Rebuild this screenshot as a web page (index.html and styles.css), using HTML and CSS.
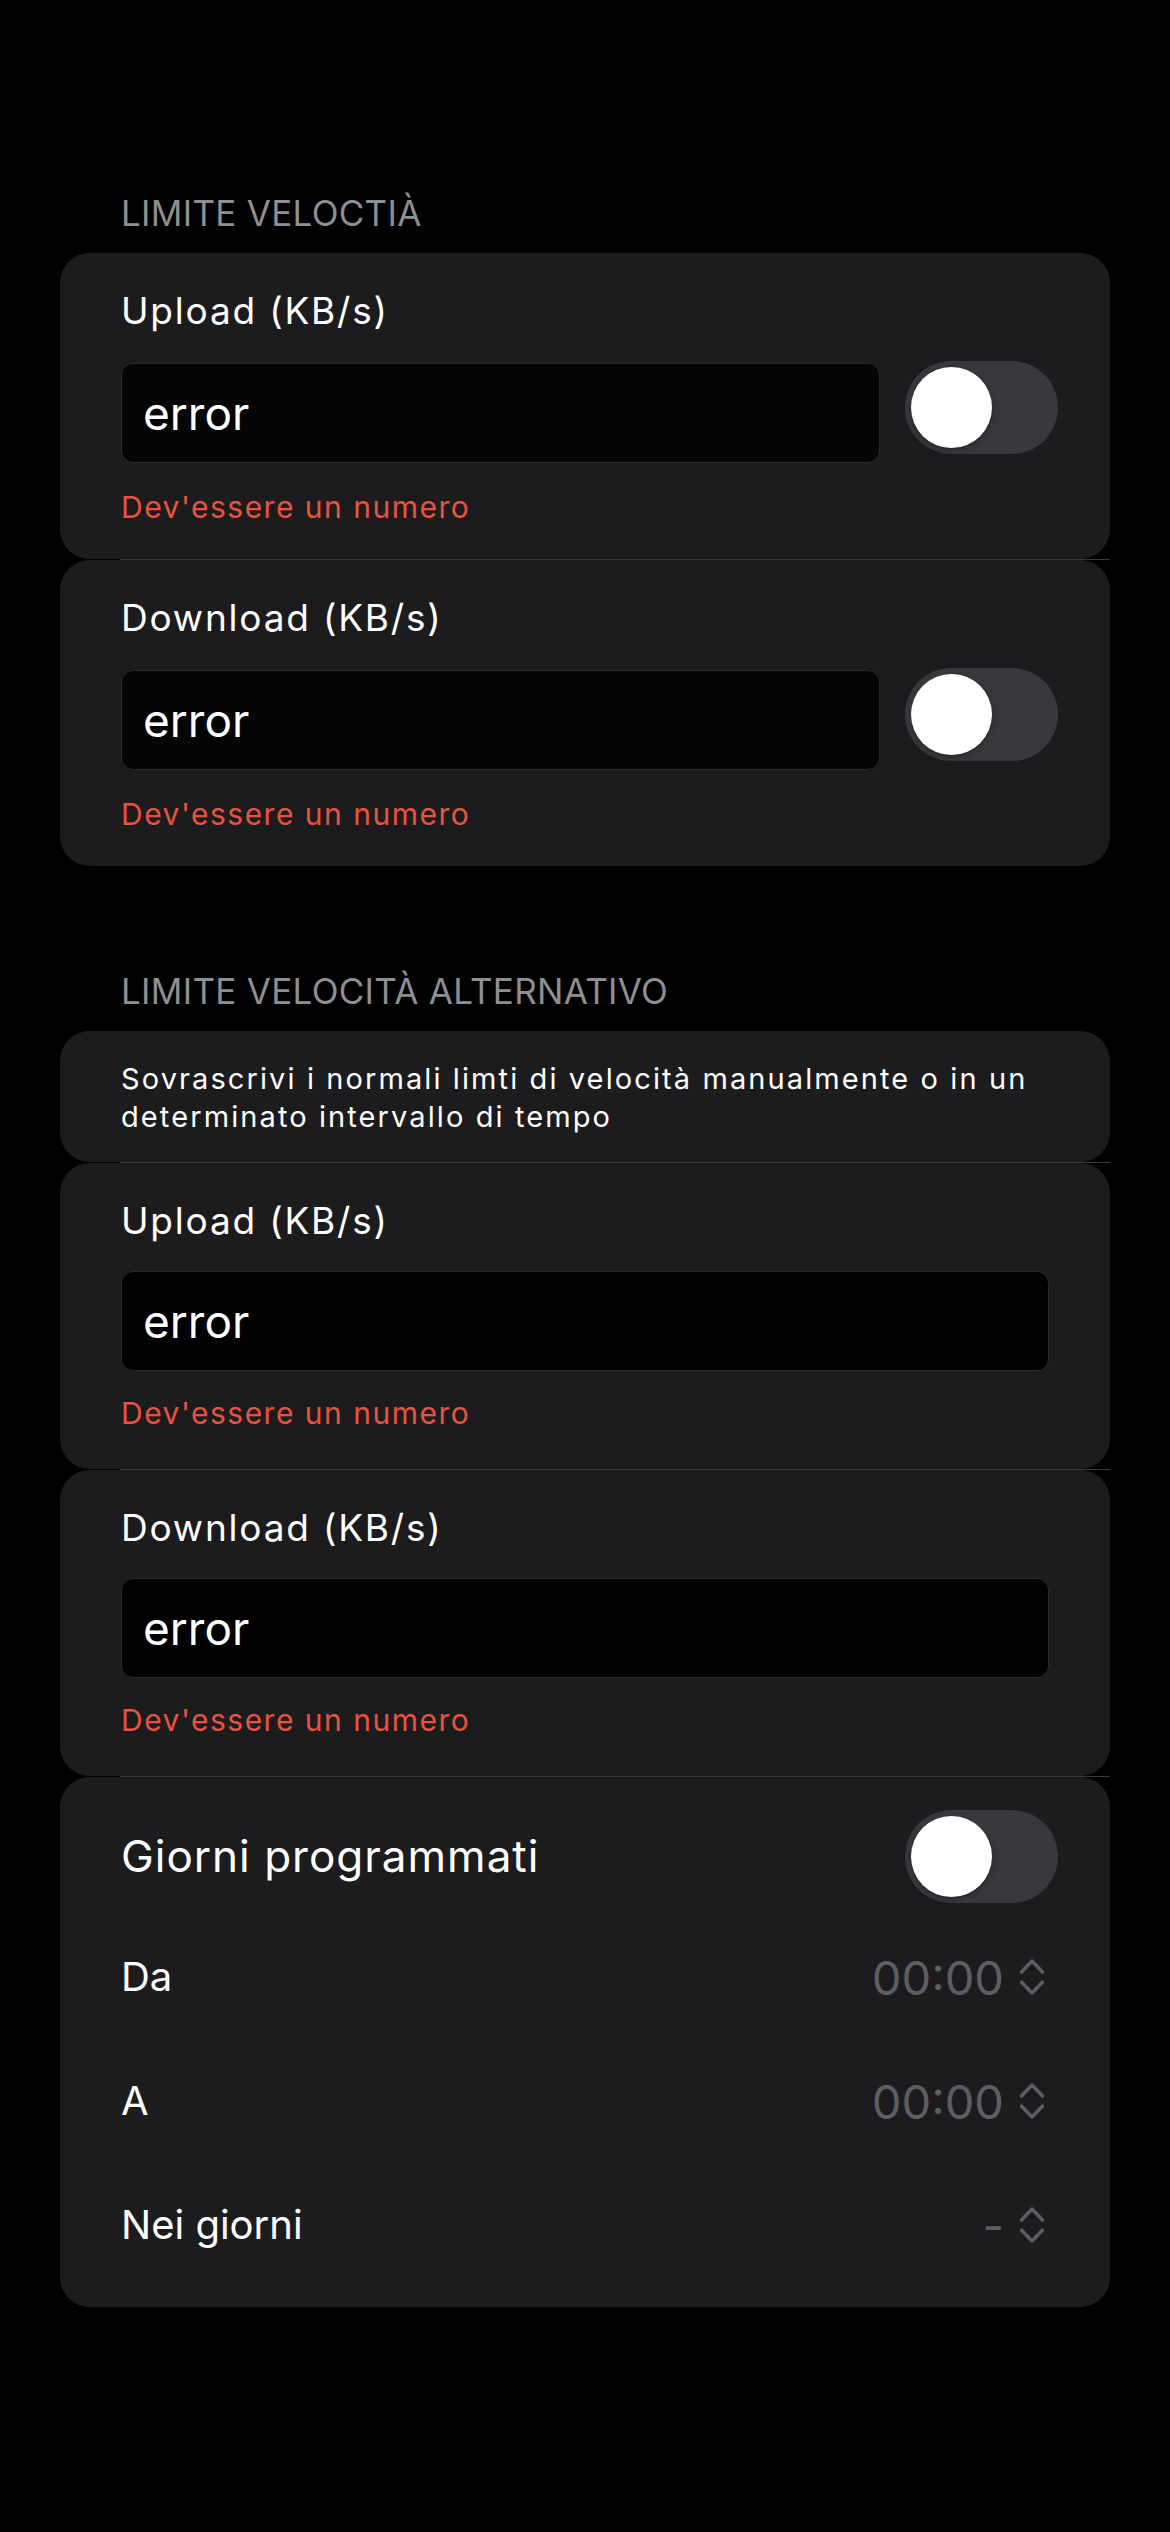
FILE: index.html
```html
<!DOCTYPE html>
<html lang="it">
<head>
<meta charset="utf-8">
<title>Limite velocità</title>
<link rel="stylesheet" href="styles.css">
</head>
<body>
<main class="page">
  <section class="section section-first">
    <h2 class="section-title">LIMITE VELOCTIÀ</h2>
    <div class="row">
      <div class="label">Upload (KB/s)</div>
      <div class="field-line">
        <div class="input input-dim">error</div>
        <div class="toggle"><span class="knob"></span></div>
      </div>
      <div class="error">Dev'essere un numero</div>
    </div>
    <div class="sep"></div>
    <div class="row">
      <div class="label">Download (KB/s)</div>
      <div class="field-line">
        <div class="input input-dim">error</div>
        <div class="toggle"><span class="knob"></span></div>
      </div>
      <div class="error">Dev'essere un numero</div>
    </div>
  </section>

  <section class="section section-second">
    <h2 class="section-title">LIMITE VELOCITÀ ALTERNATIVO</h2>
    <div class="row row-desc">
      <p class="desc">Sovrascrivi i normali limti di velocità manualmente o in un determinato intervallo di tempo</p>
    </div>
    <div class="sep"></div>
    <div class="row">
      <div class="label">Upload (KB/s)</div>
      <div class="field-line">
        <div class="input">error</div>
      </div>
      <div class="error">Dev'essere un numero</div>
    </div>
    <div class="sep"></div>
    <div class="row">
      <div class="label">Download (KB/s)</div>
      <div class="field-line">
        <div class="input">error</div>
      </div>
      <div class="error">Dev'essere un numero</div>
    </div>
    <div class="sep"></div>
    <div class="row row-schedule">
      <div class="switch-line">
        <span class="big-label">Giorni programmati</span>
        <div class="toggle toggle-plain"><span class="knob"></span></div>
      </div>
      <div class="picker-line">
        <span class="picker-label">Da</span>
        <span class="picker-value"><span class="value">00:00</span>
          <svg class="chev" viewBox="0 0 24 36" width="24" height="36"><path d="M1.5 13 L12 2 L22.5 13 M1.5 23 L12 34 L22.5 23"/></svg>
        </span>
      </div>
      <div class="picker-line">
        <span class="picker-label">A</span>
        <span class="picker-value"><span class="value">00:00</span>
          <svg class="chev" viewBox="0 0 24 36" width="24" height="36"><path d="M1.5 13 L12 2 L22.5 13 M1.5 23 L12 34 L22.5 23"/></svg>
        </span>
      </div>
      <div class="picker-line">
        <span class="picker-label">Nei giorni</span>
        <span class="picker-value"><span class="value">-</span>
          <svg class="chev" viewBox="0 0 24 36" width="24" height="36"><path d="M1.5 13 L12 2 L22.5 13 M1.5 23 L12 34 L22.5 23"/></svg>
        </span>
      </div>
    </div>
  </section>
</main>
</body>
</html>
```

FILE: styles.css
```css
* { box-sizing: border-box; }

html, body {
  margin: 0;
  padding: 0;
  background: #000;
  color: #fff;
  font-family: Inter, "Noto Sans", "Liberation Sans", sans-serif;
}

body {
  min-height: 2532px;
}

.page {
  padding: 192px 60px 0 60px;
}

.section-second {
  margin-top: 104px;
}

.section-title {
  margin: 0 0 19px 61px;
  font-size: 35px;
  line-height: 42px;
  font-weight: 400;
  color: #8e8e93;
  letter-spacing: 0.3px;
}

.row {
  background: #1c1c1e;
  border-radius: 30px;
  padding: 36px 61px 0 61px;
  height: 306px;
}

.sep {
  height: 1px;
  margin-left: 60px;
  background: #3a3a3c;
}

.label {
  font-size: 37px;
  line-height: 44px;
  letter-spacing: 1.8px;
  color: #fff;
}

.field-line {
  display: flex;
  align-items: center;
  gap: 25px;
  margin-top: 28px;
}

.input {
  flex: 1;
  height: 100px;
  border: 1px solid #2a2a2c;
  border-radius: 12px;
  background: #000;
  padding-left: 21px;
  display: flex;
  align-items: center;
  font-size: 46px;
  color: #fff;
}

.input-dim {
  background: #050505;
}

.toggle {
  flex: none;
  position: relative;
  width: 153px;
  height: 93px;
  border-radius: 47px;
  background: #39393d;
  margin-bottom: 11px;
  margin-right: -9px;
}

.toggle-plain {
  margin: 0 -9px 0 0;
}

.knob {
  position: absolute;
  left: 6px;
  top: 6px;
  width: 81px;
  height: 81px;
  border-radius: 50%;
  background: #fff;
  box-shadow: 0 3px 8px rgba(0, 0, 0, 0.22), 0 1px 2px rgba(0, 0, 0, 0.2);
}

.error {
  margin-top: 24px;
  font-size: 30px;
  line-height: 36px;
  letter-spacing: 1.5px;
  color: #e8533f;
}

.row-desc {
  height: 131px;
  padding-top: 29px;
}

.desc {
  margin: 0;
  font-size: 29px;
  line-height: 38px;
  letter-spacing: 2.1px;
  color: #fff;
}

.row-schedule {
  height: 530px;
  padding-top: 33px;
}

.switch-line {
  display: flex;
  align-items: center;
  justify-content: space-between;
  height: 93px;
}

.big-label {
  font-size: 44px;
  line-height: 53px;
  letter-spacing: 1px;
}

.switch-line + .picker-line {
  margin-top: 12px;
}

.picker-line {
  display: flex;
  align-items: center;
  justify-content: space-between;
  height: 124px;
}

.picker-label {
  font-size: 40px;
  line-height: 48px;
}

.picker-value {
  display: flex;
  align-items: center;
  gap: 16px;
  margin-right: 5px;
  color: #5e5e62;
}

.value {
  font-size: 47px;
  line-height: 58px;
  margin-top: 2px;
}

.chev {
  display: block;
}

.chev path {
  fill: none;
  stroke: #5e5e62;
  stroke-width: 3.4;
  stroke-linecap: round;
  stroke-linejoin: round;
}
```
